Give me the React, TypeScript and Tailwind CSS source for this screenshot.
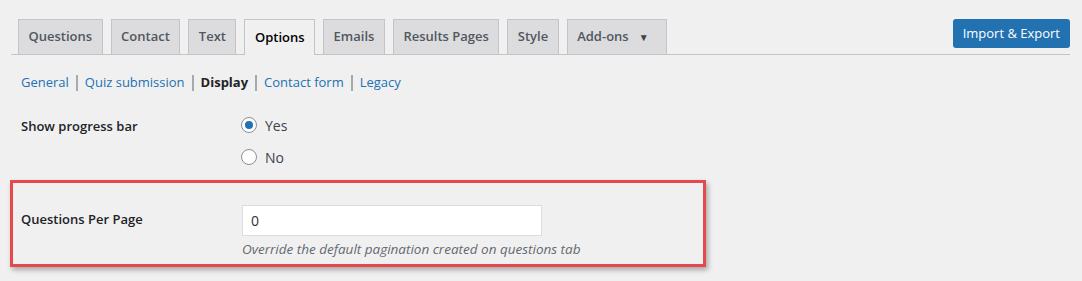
import { useState } from "react";

const tabs = ["Questions", "Contact", "Text", "Options", "Emails", "Results Pages", "Style", "Add-ons"];
const subTabs = ["General", "Quiz submission", "Display", "Contact form", "Legacy"];

const Radio = ({ checked, label, onClick }: { checked: boolean; label: string; onClick: () => void }) => (
  <label className="flex items-center gap-2 cursor-pointer" onClick={onClick}>
    <span className="w-4 h-4 rounded-full border border-[#8c8f94] bg-white flex items-center justify-center">
      {checked && <span className="w-2 h-2 rounded-full bg-[#2271b1]" />}
    </span>
    <span className="text-[14px] text-[#3c434a]">{label}</span>
  </label>
);

export default function App() {
  const [progress, setProgress] = useState(true);
  return (
    <div className="w-[1082px] h-[281px] bg-[#f0f0f1] pl-[11px] pr-[12px] pt-[19px] font-['Open_Sans',sans-serif] text-[#1d2327]">
      <div className="flex items-end border-b border-[#c3c4c7]">
        <div className="flex gap-2 pl-[7px]">
          {tabs.map((t) =>
            t === "Options" ? (
              <div
                key={t}
                className="h-[36px] -mb-px px-[9.5px] flex items-center border border-b-0 border-[#c3c4c7] bg-[#f0f0f1] text-[13px] font-semibold text-black"
              >
                {t}
              </div>
            ) : (
              <div
                key={t}
                className="h-[35px] px-[9.5px] flex items-center border border-b-0 border-[#c3c4c7] bg-[#dcdcde] text-[13px] font-semibold text-[#50575e]"
              >
                {t}
                {t === "Add-ons" && <span className="text-[10px] text-[#3c434a] ml-[10px] mr-[8px]">▼</span>}
              </div>
            )
          )}
        </div>
        <button className="ml-auto mb-[6px] h-[29px] px-[10px] rounded-[3px] bg-[#2271b1] text-white text-[13px]">
          Import &amp; Export
        </button>
      </div>

      <div className="flex items-center mt-[18px] ml-[10px] text-[13px]">
        {subTabs.map((s, i) => (
          <span key={s} className="flex items-center">
            {i > 0 && <span className="mx-[7px] w-[2px] h-[16px] bg-[#a7aaad]" />}
            <span className={s === "Display" ? "font-bold text-[#1d2327]" : "text-[#2271b1]"}>{s}</span>
          </span>
        ))}
      </div>

      <div className="flex mt-[20px] ml-[10px]">
        <div className="w-[220px] pt-[4px] text-[13px] font-semibold">Show progress bar</div>
        <div className="flex flex-col gap-[11px] pt-[2px]">
          <Radio checked={progress} label="Yes" onClick={() => setProgress(true)} />
          <Radio checked={!progress} label="No" onClick={() => setProgress(false)} />
        </div>
      </div>

      <div className="mt-[12px] -ml-px w-[696px] h-[87px] border-[3px] border-[#e5484d] shadow-[2px_3px_5px_rgba(0,0,0,0.3)] flex pl-[8px] pt-[22px]">
        <div className="w-[221px] pt-[5px] text-[13px] font-semibold">Questions Per Page</div>
        <div>
          <input
            defaultValue="0"
            className="w-[300px] h-[31px] px-[8px] bg-white border border-[#dcdcde] text-[14px] text-[#2c3338] outline-none"
          />
          <p className="mt-[3px] text-[13.5px] italic text-[#646970]">Override the default pagination created on questions tab</p>
        </div>
      </div>
    </div>
  );
}
